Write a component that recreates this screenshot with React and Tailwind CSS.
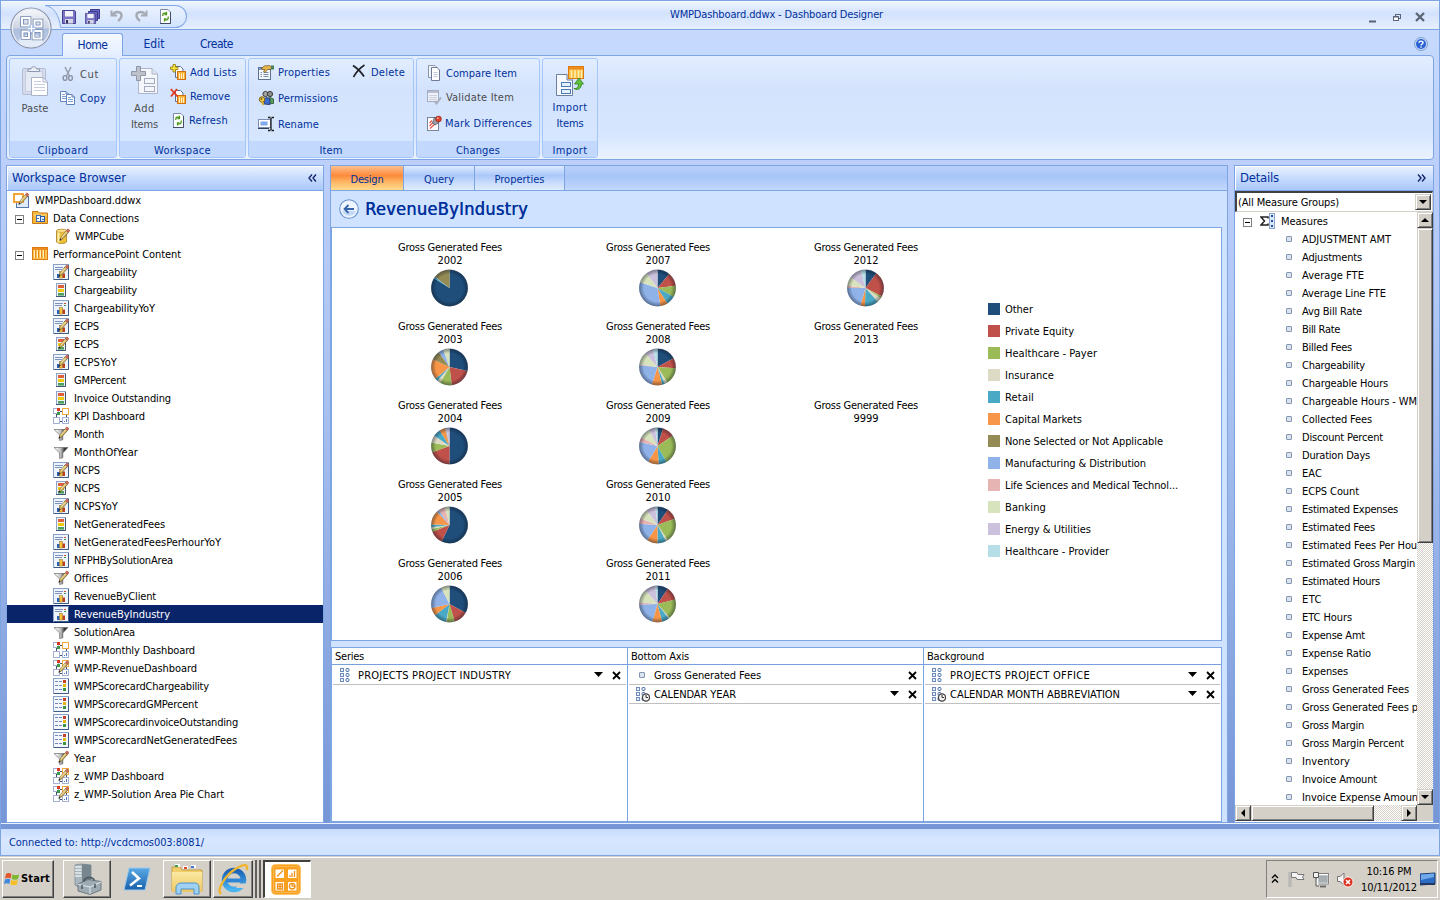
import React, { useLayoutEffect, useRef } from "react";

/* Text fitted to a fixed advance width by spreading the difference over its letters. */
function T({ w, children, flat, className = "" }) {
  const ref = useRef(null);
  useLayoutEffect(() => {
    const el = ref.current;
    if (!w || !el) return;
    el.style.letterSpacing = "0px";
    const natural = el.getBoundingClientRect().width;
    el.style.letterSpacing = `${(w - natural) / String(children).length}px`;
  }, [w, children]);
  return (
    <span className={`flex ${flat ? "" : "-mb-px pt-px"} ${className}`}>
      <span ref={ref} className="inline-block whitespace-pre">
        {children}
      </span>
    </span>
  );
}

const Svg = ({ s = 16, h, vb, children, className = "" }) => (
  <svg width={s} height={h || s} viewBox={vb || `0 0 ${s} ${h || s}`} className={`block shrink-0 ${className}`} fill="none">
    {children}
  </svg>
);

/* ---------- small drawings ---------- */

const Pencil = () => (
  <g>
    <path d="M6 12L7 9L12.300 2.800L14.400 4.600L8.800 10.800Z" fill="#d9b866" stroke="#6b5a34" strokeWidth=".7" />
    <path d="M7.500 9.400L12.600 3.600" stroke="#f8e9ae" strokeWidth="1" />
    <path d="M12.400 2.500L13.800 .8L16 2.600L14.500 4.500Z" fill="#cf6a5a" stroke="#9c4a40" strokeWidth=".5" />
    <path d="M5.300 12.800L6.300 10.800L7.600 12Z" fill="#222" />
  </g>
);

const ReportBase = () => (
  <g>
    <rect x=".5" y=".5" width="15" height="15" fill="#eef4fd" stroke="#8aa2c8" />
    <path d="M15.500 1V15.500H1" stroke="#3f5c86" />
    <path d="M2 3.500H10M2 5.500H9" stroke="#7d93bd" />
    <path d="M11 3.500H13" stroke="#cf4a33" />
    <path d="M11 5.500H13" stroke="#3f9a4c" />
    <rect x="4" y="10" width="2.600" height="4" fill="#2c5fb4" />
    <rect x="6.600" y="7.500" width="3" height="6.500" fill="#f3c33c" stroke="#8a6a1c" strokeWidth=".5" />
    <rect x="9.600" y="9.500" width="2.400" height="4.500" fill="#b8401e" />
  </g>
);

const KpiBase = () => (
  <g>
    <rect x="3.500" y="1.500" width="9" height="13" fill="#eef3fb" stroke="#8ea3c6" />
    <path d="M12.500 2V14.500H3" stroke="#3f5878" />
    <rect x="5" y="3" width="6" height="3" fill="#e0603c" />
    <rect x="5" y="7" width="6" height="3" fill="#efc90c" />
    <rect x="5" y="11" width="6" height="2.600" fill="#4fa05a" />
  </g>
);

const DashBase = () => (
  <g shapeRendering="crispEdges">
    <path d="M3 6V10M13 6V10M7 3H9M7 13H9" stroke="#44506a" />
    <rect x=".5" y=".5" width="5" height="5" fill="#fff" stroke="#a3b2d4" />
    <rect x="9.500" y=".5" width="6" height="6" fill="#fff" stroke="#f0a93c" />
    <rect x=".5" y="9.500" width="6" height="6" fill="#fff" stroke="#a3b2d4" />
    <rect x="9.500" y="9.500" width="6" height="6" fill="#fff" stroke="#a3b2d4" />
    <rect x="4" y="0" width="3" height="3" fill="#d93a20" />
    <rect x="4" y="4" width="3" height="3" fill="#3f9a4c" />
    <path d="M11.500 13V14M13.500 11V14" stroke="#4d75b8" />
  </g>
);

const FunnelBase = () => (
  <g>
    <path d="M1 3.500H15L9.800 9V13.800L6.600 14.500V9Z" fill="url(#fun)" />
    <path d="M1 3.500H15L9.800 9V13.800L6.600 14.500V9Z" stroke="#5c5c5c" strokeWidth=".6" />
  </g>
);

const ScoreBase = () => (
  <g>
    <rect x=".5" y=".5" width="15" height="15" fill="#f4f8fe" stroke="#8aa2c8" />
    <path d="M15.500 1V15.500H1" stroke="#3f5c86" />
    <path d="M2 3.500H5M6 3.500H9M2 7.500H5M6 7.500H9M2 11.500H5M6 11.500H9" stroke="#7487b4" />
    <rect x="10" y="2" width="3" height="3" fill="#c9402a" />
    <rect x="10" y="6" width="3" height="3" fill="#e3b60c" />
    <rect x="10" y="10" width="3" height="3" fill="#3a9440" />
  </g>
);

const Folder = () => (
  <g>
    <path d="M.5 13.500V1.500H6L7.500 3H15.500V13.500Z" fill="#f6b73a" stroke="#c8791a" />
    <path d="M1.500 5H14.500" stroke="#fde08c" />
  </g>
);

const Columns = () => (
  <g shapeRendering="crispEdges">
    <rect x=".5" y="1.500" width="15" height="12" fill="#fbc24c" stroke="#dd7a12" />
    <rect x="1" y="2" width="14" height="2" fill="#f08a1c" />
    <path d="M3.500 4V12M6.500 4V12M9.500 4V12M12.500 4V12" stroke="#e68a1c" />
    <path d="M2.500 4V12M5.500 4V12M8.500 4V12M11.500 4V12" stroke="#fff0bd" />
  </g>
);

const TreeIcon = ({ kind }) => {
  const k = kind.replace("+", "");
  return (
    <Svg>
      {k === "report" && <ReportBase />}
      {k === "kpi" && <KpiBase />}
      {k === "dash" && <DashBase />}
      {k === "filter" && <FunnelBase />}
      {k === "score" && <ScoreBase />}
      {k === "columns" && <Columns />}
      {k === "conn" && (
        <g>
          <Folder />
          <rect x="4.500" y="5.500" width="4" height="6" fill="#fff" stroke="#3f6eb8" />
          <rect x="8.500" y="6.500" width="4" height="5" fill="#dce9fb" stroke="#2c5aa6" />
          <path d="M5 8.500H7M10 9.500H12" stroke="#3f6eb8" />
        </g>
      )}
      {k === "cube" && (
        <g>
          <path d="M2.500 2.500C4 1 11 1 12.500 2.500V14C11 16 4 16 2.500 14Z" fill="#f0c33a" stroke="#a87a1a" strokeWidth=".8" />
          <path d="M4.500 4V14.500" stroke="#fdf0b0" strokeWidth="2" />
          <ellipse cx="7.500" cy="2.800" rx="5" ry="1.600" fill="#fbe08a" stroke="#b88a24" strokeWidth=".5" />
        </g>
      )}
      {k === "root" && (
        <g>
          <rect x="3.500" y="4.500" width="12" height="11" fill="#dfeafb" stroke="#5474a8" />
          <rect x="1" y="2" width="9" height="8" fill="#fff" stroke="#f29c22" strokeWidth="1.800" />
        </g>
      )}
      {kind.includes("+") && <Pencil />}
    </Svg>
  );
};

const Page = ({ x = 0, y = 0 }) => (
  <g transform={`translate(${x} ${y})`}>
    <path d="M.5 .5H6L8.500 3V10.500H.5Z" fill="#fff" stroke="#5f83bd" />
    <path d="M2 3.500H5M2 5.500H7M2 7.500H7" stroke="#7ea0d4" />
    <path d="M6 .5V3H8.500" stroke="#5f83bd" />
  </g>
);

const RefreshIcon = () => (
  <Svg>
    <path d="M3.500 1.500H11L13.500 4V15.500H3.500Z" fill="#fdfefe" stroke="#7c8ba6" />
    <path d="M13.500 4V15.500H3" stroke="#3f4d66" />
    <path d="M5.800 8V7C5.800 5 8 4.800 9.500 5.600M9.500 3.800V6.500H7.500" stroke="#4e9a1c" strokeWidth="1.300" />
    <path d="M11.200 8.500V10C11.200 12 9 12.300 7.500 11.500M7.500 13.500V10.800H9.500" stroke="#4e9a1c" strokeWidth="1.300" />
  </Svg>
);

const MiniList = () => (
  <g>
    <path d="M5.500 2.500H10.500L13 5V13.500H5.500Z" fill="#fff" stroke="#5c6f92" />
    <rect x="7.500" y="7.500" width="8" height="8" fill="#f9b23c" stroke="#d0700e" />
    <path d="M9.500 9.500V15M11.500 9.500V15M13.500 9.500V15" stroke="#fff0c4" />
  </g>
);

const AddListIcon = () => (
  <Svg>
    <MiniList />
    <path d="M3 .5H5.500V3H8V5.500H5.500V8H3V5.500H.5V3H3Z" fill="#f7df3c" stroke="#927a12" strokeWidth=".8" />
  </Svg>
);
const RemoveIcon = () => (
  <Svg>
    <MiniList />
    <path d="M.800 1L7.500 8.500M7 1L1 8.500" stroke="#e23a22" strokeWidth="1.800" />
  </Svg>
);
const CutIcon = () => (
  <Svg>
    <path d="M5 1L9.500 10M11 1L6.500 10" stroke="#9aa1ae" strokeWidth="1.600" />
    <ellipse cx="5" cy="12" rx="1.900" ry="2.400" stroke="#8b93a4" strokeWidth="1.400" />
    <ellipse cx="10.500" cy="12" rx="1.900" ry="2.400" stroke="#8b93a4" strokeWidth="1.400" />
  </Svg>
);
const CopyIcon = () => (
  <Svg>
    <Page x={0} y={1} />
    <Page x={6} y={4} />
  </Svg>
);
const PasteIcon = () => (
  <Svg s={28} h={32}>
    <rect x="1.500" y="3.500" width="23" height="26" rx="1.500" fill="#d5dbea" stroke="#b5bdd2" />
    <rect x="4.500" y="6.500" width="17" height="20" fill="#e6eaf5" stroke="#c6cde0" />
    <path d="M7 6.500V4H10C10 1 15.500 1 15.500 4H18.500V6.500Z" fill="#eceff6" stroke="#8d97ae" />
    <path d="M10.500 12.500H22L26.500 17V30.500H10.500Z" fill="#fff" stroke="#aab2c8" />
    <path d="M22 12.500V17H26.500" stroke="#aab2c8" />
    <path d="M13 16.500H20M13 19.500H24M13 22.500H24M13 25.500H24" stroke="#c6cddd" />
  </Svg>
);
const AddItemsIcon = () => (
  <Svg s={28} h={32}>
    <path d="M7.500 4.500H21L26.500 10V29.500H7.500Z" fill="#f4f6fb" stroke="#aeb6c9" />
    <path d="M21 4.500V10H26.500" fill="#dde2ee" stroke="#aeb6c9" />
    <rect x="13.500" y="14.500" width="10" height="5" stroke="#a3abc0" />
    <rect x="13.500" y="22.500" width="10" height="5" stroke="#a3abc0" />
    <path d="M5.500 2.500H9.500V7.500H14.500V11.500H9.500V16.500H5.500V11.500H.5V7.500H5.500Z" fill="#bdc1ca" stroke="#8f96a6" />
  </Svg>
);
const ImportIcon = () => (
  <Svg s={32}>
    <path d="M2.500 9.500H13L18.500 15V30.500H2.500Z" fill="#f6f9fe" stroke="#6d7f9c" />
    <path d="M13 9.500V15H18.500" fill="#dde6f4" stroke="#6d7f9c" />
    <rect x="7.500" y="17.500" width="9" height="4" fill="#e3f0fd" stroke="#4a79b8" />
    <rect x="7.500" y="24.500" width="9" height="4" fill="#e3f0fd" stroke="#4a79b8" />
    <rect x="14.500" y="1.500" width="15" height="12" fill="#fcbf44" stroke="#dc7a10" />
    <rect x="15" y="2" width="14" height="2.500" fill="#ef8c1c" />
    <path d="M17.500 5V13M21 5V13M24.500 5V13M27.500 5V13" stroke="#fff0b4" strokeWidth="1.500" />
    <path d="M20 23.500C23 24 24.500 22 24.500 19H20.500L25 13L29.500 19H27.500C27.500 23 24.500 26 20 23.500Z" fill="#5fc23e" stroke="#2d7d1c" strokeWidth=".8" />
  </Svg>
);
const PropsIcon = () => (
  <Svg>
    <rect x=".5" y="3.500" width="12" height="12" fill="#f4f8fd" stroke="#5f7293" />
    <rect x="1" y="4" width="11" height="2" fill="#7c9ccc" />
    <path d="M2.500 8.500H4M5.500 8.500H10.500M2.500 10.500H4M5.500 10.500H10.500M2.500 12.500H4M5.500 12.500H10.500" stroke="#7d8fae" />
    <path d="M3 5L6 2L11 1.500L13.500 2.500V5L9.500 5.500L7 8.500L5.500 7.500L7 5.500Z" fill="#e9b94e" stroke="#74521c" strokeWidth=".7" />
    <rect x="13" y="1.500" width="3" height="4" fill="#4a7f5e" />
  </Svg>
);
const PermIcon = () => (
  <Svg>
    <circle cx="7.500" cy="4" r="2.600" fill="#a3a3a0" stroke="#3d3d3b" />
    <circle cx="12" cy="4" r="2.600" fill="#8c8c8a" stroke="#3d3d3b" />
    <path d="M8.500 14V9L12 7.500L15.500 9V13.500Z" fill="#56a05a" stroke="#2b4b2e" strokeWidth=".8" />
    <path d="M6 14V8.500L9 7.500L12 9V14.500Z" fill="#3c6cd0" stroke="#1e2f66" strokeWidth=".8" />
    <circle cx="4" cy="9.500" r="2.700" fill="#f3d04c" stroke="#7a5d12" />
    <path d="M4 11.500L5.500 15" stroke="#d8a828" strokeWidth="2" />
    <circle cx="3.400" cy="9" r=".9" fill="#6b5212" />
  </Svg>
);
const RenameIcon = () => (
  <Svg>
    <rect x=".5" y="3.500" width="12" height="8" fill="#fff" stroke="#7a8eb2" />
    <rect x="2.500" y="5.500" width="7" height="4" fill="#7fa9ee" />
    <path d="M0 12.500H11" stroke="#33415e" />
    <path d="M10 1.500H12.500M13.500 1.500H16M10 14.500H12.500M13.500 14.500H16M13 2V14" stroke="#1c1c1c" strokeWidth="1.300" />
  </Svg>
);
const DeleteIcon = () => (
  <Svg>
    <path d="M2 1.500C6 4 10 8 13 12.500" stroke="#22242a" strokeWidth="1.900" />
    <path d="M13.500 1C9 4 5 8.500 2.500 13" stroke="#22242a" strokeWidth="1.600" />
  </Svg>
);
const CompareIcon = () => (
  <Svg>
    <path d="M2.500 .5H9L11.500 3V12.500H2.500Z" fill="#eff3fa" stroke="#8d97aa" />
    <path d="M5.500 2.500H11L13.500 5V15.500H5.500Z" fill="#fff" stroke="#6d7a92" />
    <path d="M7.500 7.500H11.500M7.500 9.500H11.500M7.500 11.500H11.500" stroke="#bcc5d6" />
  </Svg>
);
const ValidateIcon = () => (
  <Svg>
    <rect x="1.500" y="1.500" width="11" height="11" fill="#f0f2f8" stroke="#a3acc2" />
    <path d="M2 3H12" stroke="#b6bed0" strokeWidth="2" />
    <path d="M3.500 6.500H11M3.500 8.500H11M3.500 10.500H11" stroke="#a4aec6" strokeDasharray="1 1" />
    <path d="M8.500 12L10.500 14.500L15 8.500" stroke="#a8aec0" strokeWidth="2" />
  </Svg>
);
const MarkIcon = () => (
  <Svg>
    <rect x="1.500" y="2.500" width="11" height="13" fill="#fdfdff" stroke="#7a8398" />
    <path d="M3.500 11L7 7.500M4 13.500L10 8M3.500 8L6 5.500" stroke="#e2564a" strokeWidth="1.200" />
    <path d="M6.500 8L8.500 2L13 7.500L9 10Z" fill="#9a9ea8" stroke="#4d5058" strokeWidth=".7" />
    <circle cx="12.500" cy="4" r="2.900" fill="#e2412c" stroke="#7e1f14" strokeWidth=".6" />
    <circle cx="11.700" cy="3.200" r=".9" fill="#fbb4a8" />
  </Svg>
);

const Floppy = ({ x = 0, y = 0, s = 14 }) => (
  <g transform={`translate(${x} ${y}) scale(${s / 14})`}>
    <path d="M.5 .5H12.500L13.500 1.500V13.500H.5Z" fill="#7c74c4" stroke="#454092" />
    <rect x="3" y="1" width="8" height="5.500" fill="#f1f2fa" />
    <rect x="3" y="9" width="8" height="4.500" fill="#d5d8e4" />
    <rect x="4" y="10" width="2" height="3.500" fill="#35315e" />
  </g>
);
const BackFloppy = ({ x, y }) => (
  <path transform={`translate(${x} ${y})`} d="M.5 .5H9.500V9.500H.5Z" fill="#6a68c4" stroke="#3c3a8c" />
);
const UndoIcon = ({ flip }) => (
  <Svg className={flip ? "-scale-x-100" : ""}>
    <path d="M2.500 2.500V7.500H8" stroke="#a6aab4" strokeWidth="2" />
    <path d="M3.500 7C6.500 2.500 13 3.500 12.500 8C12.200 10.500 10.500 12 9 13" stroke="#a6aab4" strokeWidth="2.400" />
  </Svg>
);

/* ---------- chart ---------- */

const SERIES = [
  ["Other", "#1f4e7b", 28, "bg-[#1f4e7b]"],
  ["Private Equity", "#c0504a", 69, "bg-[#c0504a]"],
  ["Healthcare - Payer", "#9bbb59", 92, "bg-[#9bbb59]"],
  ["Insurance", "#ddd9c3", 49, "bg-[#dddbc6]"],
  ["Retail", "#4aa9c5", 29, "bg-[#4aa9c5]"],
  ["Capital Markets", "#f79648", 77, "bg-[#f79648]"],
  ["None Selected or Not Applicable", "#948a54", 158, "bg-[#948a54]"],
  ["Manufacturing & Distribution", "#8fb2e8", 141, "bg-[#8fb2e8]"],
  ["Life Sciences and Medical Technol...", "#e6b4b3", 173, "bg-[#e6b4b3]"],
  ["Banking", "#d7e3bc", 41, "bg-[#d7e3bc]"],
  ["Energy & Utilities", "#ccc1dc", 86, "bg-[#ccc1dc]"],
  ["Healthcare - Provider", "#b6dee6", 104, "bg-[#b6dee6]"],
];

const YEARS = [
  [
    ["2002", [84, 0, 0, 0, 1.5, 0, 14.5, 0, 0, 0, 0, 0]],
    ["2003", [28.5, 19.5, 10.5, 3, 2.5, 18, 8, 4.5, 0, 5.5, 0, 0]],
    ["2004", [50, 19.5, 8.5, 6.5, 6.5, 5, 0.5, 0.5, 0, 0, 3, 0]],
    ["2005", [57, 12, 2.5, 1.5, 2.5, 12.5, 0, 2, 6, 4, 0, 0]],
    ["2006", [33, 12.5, 7, 0.5, 11.5, 7, 0, 21, 0, 7.5, 0, 0]],
  ],
  [
    ["2007", [11, 12, 10, 0, 8, 6.5, 0, 32.5, 0, 10, 10, 0]],
    ["2008", [17, 9, 15, 2.5, 2.5, 9, 0, 21.5, 1, 11, 7.5, 4]],
    ["2009", [5, 10.5, 26.5, 0, 7, 9.5, 0, 20, 4.5, 9.5, 5.5, 2]],
    ["2010", [9.5, 10, 21, 2, 7.5, 9.5, 0, 16.5, 5, 9, 8, 2]],
    ["2011", [9.5, 11.5, 17.5, 1, 6.5, 8.5, 0, 20, 2, 12, 9.5, 2]],
  ],
  [
    ["2012", [10, 22.5, 2, 4, 12, 4, 0, 20.5, 2, 8, 11, 4]],
    ["2013", null],
    ["9999", null],
  ],
];

function Pie({ data }) {
  const total = data.reduce((a, b) => a + b, 0);
  let acc = 0;
  const p = (f) => [18.5 + 18.3 * Math.sin(f * 2 * Math.PI), 19 - 18.3 * Math.cos(f * 2 * Math.PI)];
  return (
    <Svg s={38}>
      {data.map((v, i) => {
        if (!v) return null;
        const a = acc / total;
        acc += v;
        const b = acc / total;
        const [x1, y1] = p(a);
        const [x2, y2] = p(b);
        return <path key={i} d={`M18.5 19L${x1} ${y1}A18.3 18.3 0 ${b - a > 0.5 ? 1 : 0} 1 ${x2} ${y2}Z`} fill={SERIES[i][1]} />;
      })}
      <circle cx="18.5" cy="19" r="18.5" fill="url(#bevel)" />
    </Svg>
  );
}

/* ---------- data ---------- */

const TREE = [
  ["report+", "Chargeability", 63],
  ["kpi", "Chargeability", 63],
  ["report", "ChargeabilityYoY", 81],
  ["report+", "ECPS", 25],
  ["kpi+", "ECPS", 25],
  ["report+", "ECPSYoY", 43],
  ["kpi", "GMPercent", 52],
  ["kpi", "Invoice Outstanding", 97],
  ["dash", "KPI Dashboard", 71],
  ["filter+", "Month", 30],
  ["filter", "MonthOfYear", 64],
  ["report+", "NCPS", 26],
  ["kpi+", "NCPS", 26],
  ["report+", "NCPSYoY", 44],
  ["kpi", "NetGeneratedFees", 91],
  ["report", "NetGeneratedFeesPerhourYoY", 147],
  ["report", "NFPHBySolutionArea", 99],
  ["filter+", "Offices", 34],
  ["report", "RevenueByClient", 82],
  ["report", "RevenueByIndustry", 96],
  ["filter", "SolutionArea", 61],
  ["dash", "WMP-Monthly Dashboard", 121],
  ["dash+", "WMP-RevenueDashboard", 123],
  ["score", "WMPScorecardChargeability", 135],
  ["score", "WMPScorecardGMPercent", 124],
  ["score", "WMPScorecardinvoiceOutstanding", 164],
  ["score", "WMPScorecardNetGeneratedFees", 163],
  ["filter+", "Year", 22],
  ["dash+", "z_WMP Dashboard", 90],
  ["dash+", "z_WMP-Solution Area Pie Chart", 150],
];

const MEASURES = [
  ["ADJUSTMENT AMT", 89],
  ["Adjustments", 60],
  ["Average FTE", 62],
  ["Average Line FTE", 84],
  ["Avg Bill Rate", 60],
  ["Bill Rate", 38],
  ["Billed Fees", 50],
  ["Chargeability", 63],
  ["Chargeable Hours", 86],
  ["Chargeable Hours - WM", 115],
  ["Collected Fees", 70],
  ["Discount Percent", 81],
  ["Duration Days", 68],
  ["EAC", 20],
  ["ECPS Count", 57],
  ["Estimated Expenses", 96],
  ["Estimated Fees", 73],
  ["Estimated Fees Per Hou", 115],
  ["Estimated Gross Margin", 113],
  ["Estimated Hours", 78],
  ["ETC", 20],
  ["ETC Hours", 50],
  ["Expense Amt", 63],
  ["Expense Ratio", 69],
  ["Expenses", 46],
  ["Gross Generated Fees", 107],
  ["Gross Generated Fees p", 116],
  ["Gross Margin", 62],
  ["Gross Margin Percent", 102],
  ["Inventory", 48],
  ["Invoice Amount", 75],
  ["Invoice Expense Amoun", 116],
];

/* ---------- building blocks ---------- */

const Toggle = () => (
  <span className="mt-[2px] flex h-[9px] w-[9px] shrink-0 items-center justify-center border border-[#808080] bg-white">
    <span className="h-px w-[5px] bg-black" />
  </span>
);

const Group = ({ label, lw, className, children }) => (
  <div className={`flex h-[100px] flex-col overflow-hidden rounded-[3px] border border-[#a5c6fb] bg-[linear-gradient(#e2edff,#d3e3fd_30%,#d6e6fe_80%)] ${className}`}>
    <div className="flex h-[82px]">{children}</div>
    <div className="flex h-4 items-center justify-center bg-[#c2d8fc] pt-[2px] text-[#00309c]">
      <T w={lw}>{label}</T>
    </div>
  </div>
);

const Cmd = ({ icon, label, w, off, className = "h-6", gap = "gap-1" }) => (
  <div className={`flex items-center ${gap} ${className} ${off ? "text-[#4d4d4d]" : "text-[#00309c]"}`}>
    {icon}
    <T w={w}>{label}</T>
  </div>
);

const MeasureDot = () => (
  <span className="h-[6px] w-[6px] shrink-0 rounded-[1px] border border-[#8397b5] bg-[#dbe3ee]" />
);

const DimIcon = ({ clock }) => (
  <Svg>
    {[1.5, 6.5, 11.5].map((y) => (
      <g key={y}>
        <rect x="2.500" y={y} width="3" height="3" fill="#e8f0fb" stroke="#6f8cbc" />
        <rect x="8" y={y} width="3" height="3" rx="1" fill="#e8f0fb" stroke="#4f72ae" />
      </g>
    ))}
    {clock && (
      <g>
        <circle cx="12" cy="11.500" r="3.600" fill="#f2f2f2" stroke="#444" strokeWidth="1.300" />
        <path d="M12 9V11.500H14" stroke="#333" />
      </g>
    )}
  </Svg>
);

const DropRow = ({ icon, label, w, arrow }) => (
  <div className="mx-px flex h-[19px] items-center border-b border-[#c0c0c0]">
    <div className="flex w-[25px] justify-center">{icon}</div>
    <T w={w}>{label}</T>
    <div className="flex-1" />
    {arrow && (
      <Svg s={9} h={5} className="-mt-[2px]">
        <path d="M0 0H9L4.500 5Z" fill="#000" />
      </Svg>
    )}
    <Svg s={9} h={9} className="mr-[5px] ml-[9px]">
      <path d="M1 1L8 8M8 1L1 8" stroke="#000" strokeWidth="1.800" />
    </Svg>
  </div>
);

const DropZone = ({ title, w, className, children }) => (
  <div className={`flex flex-col ${className}`}>
    <div className="mb-px flex h-[17px] items-center border-b border-[#7a9fde] pl-[3px]">
      <T w={w}>{title}</T>
    </div>
    {children}
  </div>
);

const raised = "border border-t-[#d4d0c8] border-l-[#d4d0c8] border-r-[#404040] border-b-[#404040] bg-[#d4d0c8] shadow-[inset_1px_1px_0_#fff,inset_-1px_-1px_0_#808080]";
const taskBtn = "flex h-[38px] items-center justify-center border border-t-white border-l-white border-r-[#404040] border-b-[#404040] bg-[#d4d0c8] shadow-[inset_-1px_-1px_0_#808080]";
const checker = "bg-[repeating-conic-gradient(#fff_0_25%,#d4d0c8_0_50%)] bg-[length:2px_2px]";

const ScrollBtn = ({ d, className = "" }) => (
  <div className={`flex h-4 w-4 shrink-0 items-center justify-center ${raised} ${className}`}>
    <Svg s={8}>
      <path d={d} fill="#000" />
    </Svg>
  </div>
);

/* ---------- page ---------- */

function TitleBar() {
  return (
    <div className="relative flex h-[30px] shrink-0 items-center border-y border-[#7da4e3] bg-[linear-gradient(#f2f7ff,#dbe8ff_30%,#d3e2fd_45%,#e6effe)]">
      <div className="flex h-full w-[186px] items-center">
        <Svg s={16} h={23} className="mt-[2px] ml-[44px]">
          <path d="M0 .5H16V22.500H15.500C14.500 11 9 1.500 0 .5Z" fill="#e0ebff" />
          <path d="M16 22.500H15.500C14.500 11 9 1.500 0 .5H16" stroke="#82a8e6" />
        </Svg>
        <div className="mt-[2px] flex h-[23px] w-[126px] items-center gap-2 rounded-r-[12px] border border-l-0 border-[#82a8e6] bg-[linear-gradient(#eaf2ff,#d3e3fd)]">
          <Svg><Floppy x={1} y={2} s={14} /></Svg>
          <Svg><BackFloppy x={5} y={1} /><BackFloppy x={3} y={3} /><Floppy x={0} y={5} s={11} /></Svg>
          <UndoIcon />
          <UndoIcon flip />
          <RefreshIcon />
        </div>
      </div>
      <div className="-mt-[2px] flex flex-1 justify-center text-[#00309c]">
        <T w={213}>WMPDashboard.ddwx - Dashboard Designer</T>
      </div>
      <div className="flex w-[73px] items-center pt-[4px] pl-[2px]">
        <Svg s={9} h={11}><path d="M1 9.500H8" stroke="#5a6474" strokeWidth="2" /></Svg>
        <Svg s={9} h={9} className="ml-[16px]">
          <rect x="2.500" y="1.500" width="5" height="4" stroke="#5a6474" />
          <rect x=".5" y="3.500" width="5" height="4" fill="#fff" stroke="#5a6474" />
          <path d="M0 4H6" stroke="#5a6474" />
        </Svg>
        <Svg s={10} className="ml-[13px]"><path d="M1 1L9 9M9 1L1 9" stroke="#5a6474" strokeWidth="2.300" /></Svg>
      </div>
      <Svg s={44} className="absolute top-[5px] left-[8px]">
        <circle cx="22" cy="22" r="20" fill="url(#orb)" stroke="#8b93a8" strokeWidth="1.200" />
        <circle cx="22" cy="22" r="18.700" stroke="#e9edf6" strokeWidth="1.200" />
        <path d="M4 22.500H40A18 18 0 0 1 4 22.500Z" fill="#8fa9d6" opacity=".5" />
        <ellipse cx="22" cy="34.500" rx="12" ry="6" fill="#f6faff" opacity=".7" />
        <g stroke="#7086b0" strokeWidth="3.600">
          <path d="M13 12H20.500V19.500H13ZM25.500 14.500H32.500V20.500H25.500ZM13.500 25.500H20V32H13.500ZM24.500 25H32.500V32.500H24.500Z" />
        </g>
        <g stroke="#fff" strokeWidth="2">
          <path d="M13 12H20.500V19.500H13ZM25.500 14.500H32.500V20.500H25.500ZM13.500 25.500H20V32H13.500ZM24.500 25H32.500V32.500H24.500Z" />
        </g>
        <circle cx="22.500" cy="22.500" r="4" fill="#b3c8ee" opacity=".8" />
        <path d="M22.500 19V26M19 22.500H26" stroke="#fff" strokeWidth="1" />
      </Svg>
    </div>
  );
}

function Ribbon() {
  return (
    <div className="shrink-0 px-[5px]">
      <div className="flex h-[25px] items-end pl-[56px] text-[12px] text-[#00309c]">
        <div className="z-10 -mb-px flex h-[23px] w-[61px] items-center justify-center rounded-t-[3px] border border-b-0 border-[#7da4e3] bg-[linear-gradient(#f4f8ff,#e4eeff)]">
          <T w={30} flat>Home</T>
        </div>
        <div className="flex h-[22px] w-[62px] items-center justify-center"><T w={21} flat>Edit</T></div>
        <div className="flex h-[22px] w-[63px] items-center justify-center"><T w={33} flat>Create</T></div>
        <div className="flex-1" />
        <Svg s={14} className="mr-[6px] mb-[4px]">
          <circle cx="7" cy="7" r="6.500" fill="#c5daf8" stroke="#7f9fd0" />
          <circle cx="7" cy="7" r="5" fill="#2a62d4" />
          <path d="M5 5.800C5 3.500 9 3.500 9 5.800C9 7 7 7 7 8.500M7 9.500V10.700" stroke="#fff" strokeWidth="1.400" />
        </Svg>
      </div>
      <div className="flex h-[105px] gap-[2px] rounded-[4px] border border-[#7da4e3] bg-[linear-gradient(#e2edff,#d3e3fd_35%,#d6e6fe_75%,#eaf2ff)] px-[2px] py-[2px]">
        <Group label="Clipboard" lw={51} className="w-[108px]">
          <div className="flex w-[50px] flex-col items-center pt-1.5 text-[#4d4d4d]">
            <PasteIcon />
            <T w={27} className="mt-[3px]">Paste</T>
          </div>
          <div className="flex flex-col pt-[3px]">
            <Cmd icon={<CutIcon />} label="Cut" w={19} off />
            <Cmd icon={<CopyIcon />} label="Copy" w={26} />
          </div>
        </Group>
        <Group label="Workspace" lw={57} className="w-[127px]">
          <div className="flex w-[49px] flex-col items-center pt-[5px] text-[#4d4d4d]">
            <AddItemsIcon />
            <T w={21} className="mt-[4px]">Add</T>
            <T w={27}>Items</T>
          </div>
          <div className="flex flex-col pt-px pl-px">
            <Cmd icon={<AddListIcon />} label="Add Lists" w={47} />
            <Cmd icon={<RemoveIcon />} label="Remove" w={40} />
            <Cmd icon={<RefreshIcon />} label="Refresh" w={39} gap="gap-[3px]" />
          </div>
        </Group>
        <Group label="Item" lw={23} className="w-[166px]">
          <div className="flex w-[92px] flex-col pl-[9px]">
            <Cmd icon={<PropsIcon />} label="Properties" w={52} className="h-[26px]" />
            <Cmd icon={<PermIcon />} label="Permissions" w={60} className="h-[26px]" />
            <Cmd icon={<RenameIcon />} label="Rename" w={41} className="h-[26px]" />
          </div>
          <div className="pl-[10px]">
            <Cmd icon={<DeleteIcon />} label="Delete" w={34} className="h-[26px]" />
          </div>
        </Group>
        <Group label="Changes" lw={44} className="w-[124px]">
          <div className="flex flex-col pt-[2px] pl-[9px]">
            <Cmd icon={<CompareIcon />} label="Compare Item" w={71} />
            <Cmd icon={<ValidateIcon />} label="Validate Item" w={68} off />
            <Cmd icon={<MarkIcon />} label="Mark Differences" w={87} className="h-7" gap="gap-[3px]" />
          </div>
        </Group>
        <Group label="Import" lw={35} className="w-[56px]">
          <div className="flex w-full flex-col items-center pt-[6px] text-[#00309c]">
            <ImportIcon />
            <T w={35} className="mt-[2px]">Import</T>
            <T w={27}>Items</T>
          </div>
        </Group>
      </div>
    </div>
  );
}

const PanelHead = ({ title, w, right }) => (
  <div className="flex h-[25px] shrink-0 items-center justify-between border-b border-[#7da4e3] bg-[linear-gradient(#eaf2ff,#cbddfd_45%,#aac8fa)] pr-[6px] pl-[5px] text-[13px] text-[#00309c] shadow-[inset_1px_1px_0_#fff]">
    <T w={w} flat>{title}</T>
    <Svg s={9} h={8} className={right ? "mr-px -scale-x-100" : ""}>
      <path d="M4 .5L1 4L4 7.500M8 .5L5 4L8 7.500" stroke="#14286e" strokeWidth="1.400" />
    </Svg>
  </div>
);

function Workspace() {
  return (
    <div className="flex w-[318px] flex-col border border-[#7da4e3] bg-white">
      <PanelHead title="Workspace Browser" w={114} />
      <div className="flex h-[18px] items-center pl-[6px]">
        <TreeIcon kind="root+" />
        <T w={106} className="ml-[6px]">WMPDashboard.ddwx</T>
      </div>
      <div className="flex h-[18px] items-center pl-2">
        <Toggle />
        <span className="ml-[8px]"><TreeIcon kind="conn" /></span>
        <T w={86} className="ml-[5px]">Data Connections</T>
      </div>
      <div className="flex h-[18px] items-center pl-[47px]">
        <TreeIcon kind="cube+" />
        <T w={49} className="ml-[5px]">WMPCube</T>
      </div>
      <div className="flex h-[18px] items-center pl-2">
        <Toggle />
        <span className="ml-[8px]"><TreeIcon kind="columns" /></span>
        <T w={128} className="ml-[5px]">PerformancePoint Content</T>
      </div>
      {TREE.map(([k, t, w], i) => (
        <div key={i} className={`flex h-[18px] items-center pl-[46px] ${i === 19 ? "bg-[#0a246a] text-white" : ""}`}>
          <TreeIcon kind={k} />
          <T w={w} className="ml-[5px]">{t}</T>
        </div>
      ))}
    </div>
  );
}

function Designer() {
  return (
    <div className="flex w-[898px] flex-col border border-[#7da4e3] bg-[#cfe2ff]">
      <div className="flex h-[25px] shrink-0 border-b border-[#7da4e3] bg-[linear-gradient(#b9d0fb,#a8c5f8_45%,#c3d8fd)] text-[#00309c]">
        <div className="flex w-[73px] items-center justify-center border-r border-[#7da4e3] bg-[linear-gradient(#fdc08d,#fd8a3c_40%,#fdb462_65%,#fedc8c)] pt-px"><T w={33}>Design</T></div>
        <div className="flex w-[71px] items-center justify-center border-r border-[#7da4e3] bg-[linear-gradient(#dfeaff,#a9c7f9_40%,#c5dafc_65%,#dfecff)] pt-px"><T w={30}>Query</T></div>
        <div className="flex w-[90px] items-center justify-center border-r border-[#7da4e3] bg-[linear-gradient(#dfeaff,#a9c7f9_40%,#c5dafc_65%,#dfecff)] pt-px"><T w={50}>Properties</T></div>
      </div>
      <div className="flex h-[36px] shrink-0 items-center pl-[8px]">
        <Svg s={20}>
          <circle cx="10" cy="10" r="9.300" fill="#eef5ff" stroke="#6a93cf" strokeWidth="1.100" />
          <path d="M3 12A7.500 7.500 0 0 0 17 12Z" fill="#c3d9f8" />
          <path d="M15 10H6M9.500 6L5.500 10L9.500 14" stroke="#3464ac" strokeWidth="1.800" />
        </Svg>
        <div className="ml-[6px] text-[18px] leading-[22px] text-[#00309c] [text-shadow:0.4px_0_0_#00309c]">
          <T w={163} flat>RevenueByIndustry</T>
        </div>
      </div>
      <div className="flex h-[414px] w-[891px] shrink-0 border border-[#7da4e3] bg-white">
        <div className="grid h-[407px] w-[638px] shrink-0 grid-cols-3 pt-[12px] pl-[14px]">
          {YEARS.map((col, c) => (
            <div key={c} className="flex flex-col">
              {col.map(([y, d]) => (
                <div key={y} className="flex h-[79px] shrink-0 flex-col items-center leading-[13px]">
                  <T w={104}>Gross Generated Fees</T>
                  <T w={25}>{y}</T>
                  <div className="mt-[3px] h-[38px]">{d && <Pie data={d} />}</div>
                </div>
              ))}
            </div>
          ))}
        </div>
        <div className="flex flex-col pt-[70px] pl-[18px]">
          {SERIES.map(([n, , w, bg]) => (
            <div key={n} className="flex h-[22px] items-center">
              <span className={`h-3 w-3 ${bg}`} />
              <T w={w} className="ml-[5px]">{n}</T>
            </div>
          ))}
        </div>
      </div>
      <div className="mt-[6px] flex w-[891px] flex-1 border border-[#7da4e3] bg-white">
        <DropZone title="Series" w={29} className="w-[296px] border-r border-[#7da4e3]">
          <DropRow icon={<DimIcon />} label="PROJECTS PROJECT INDUSTRY" w={153} arrow />
        </DropZone>
        <DropZone title="Bottom Axis" w={58} className="w-[296px] border-r border-[#7da4e3]">
          <DropRow icon={<MeasureDot />} label="Gross Generated Fees" w={107} />
          <DropRow icon={<DimIcon clock />} label="CALENDAR YEAR" w={82} arrow />
        </DropZone>
        <DropZone title="Background" w={57} className="flex-1">
          <DropRow icon={<DimIcon />} label="PROJECTS PROJECT OFFICE" w={140} arrow />
          <DropRow icon={<DimIcon clock />} label="CALENDAR MONTH ABBREVIATION" w={170} arrow />
        </DropZone>
      </div>
    </div>
  );
}

function Details() {
  return (
    <div className="flex w-[200px] flex-col border border-[#7da4e3] bg-white">
      <PanelHead title="Details" w={39} right />
      <div className="flex h-[21px] shrink-0 items-center justify-between border border-t-2 border-l-2 border-[#d4d0c8] border-t-[#404040] border-l-[#404040] bg-white pr-px pl-px">
        <T w={101}>{"(All Measure Groups)"}</T>
        <ScrollBtn d="M0 2H8L4 6Z" />
      </div>
      <div className="flex h-[593px] shrink-0">
        <div className="w-[182px] overflow-hidden">
          <div className="flex h-[18px] items-center pl-2">
            <Toggle />
            <Svg className="ml-[8px]">
              <path d="M8 5.500V4H1L4.500 8L1 12H8V10.500" stroke="#222" strokeWidth="1.500" />
              <rect x="9.500" y=".5" width="5" height="15" fill="#dce7f8" stroke="#8aa5d0" />
              <path d="M11 3H13M11 8H13M11 13H13" stroke="#2c50a4" strokeWidth="2" />
            </Svg>
            <T w={47} className="ml-[5px]">Measures</T>
          </div>
          {MEASURES.map(([t, w], i) => (
            <div key={i} className="flex h-[18px] items-center pl-[51px]">
              <MeasureDot />
              <T w={w} className="ml-[10px]">{t}</T>
            </div>
          ))}
        </div>
        <div className={`flex w-4 flex-col ${checker}`}>
          <ScrollBtn d="M0 6H8L4 2Z" />
          <div className={`h-[315px] ${raised}`} />
          <div className="flex-1" />
          <ScrollBtn d="M0 2H8L4 6Z" />
        </div>
      </div>
      <div className="flex h-4 bg-[#d4d0c8]">
        <div className={`flex h-4 w-[182px] ${checker}`}>
          <ScrollBtn d="M6 0V8L2 4Z" />
          <div className={`w-[123px] ${raised}`} />
          <div className="flex-1" />
          <ScrollBtn d="M2 0V8L6 4Z" />
        </div>
      </div>
    </div>
  );
}

function Taskbar() {
  return (
    <div className="flex h-[44px] border-t border-[#d4d0c8] bg-[#d4d0c8] pt-[3px] shadow-[inset_0_1px_0_#fff]">
      <div className={`ml-[2px] w-[52px] gap-px ${taskBtn}`}>
        <Svg s={16} className="-ml-[2px]">
          <path d="M2 3C4 1.500 6 2 7.500 3L6.500 7.500C5 6.500 3 6.500 1 7.500Z" fill="#e2562a" />
          <path d="M8.500 3.500C10.500 4.500 12.500 4.500 15 3.500L14 8C12 9 9.500 8.800 7.500 7.800Z" fill="#7cb82c" />
          <path d="M1 8.500C3 7.500 5 7.500 6.300 8.500L5.300 13C4 12 2 12 0 13Z" fill="#3f86dc" />
          <path d="M7.300 9C9 10 11.500 10 13.800 9L12.800 13.500C10.500 14.500 8 14.300 6.300 13.300Z" fill="#f8bf24" />
        </Svg>
        <T w={29} flat className="font-bold">Start</T>
      </div>
      <div className={`ml-[9px] w-[48px] ${taskBtn}`}>
        <Svg s={32}>
          <path d="M4 2L10 1L20 2V23L10 25L4 22Z" fill="#a9b6bd" stroke="#7c8a94" strokeWidth=".8" />
          <path d="M11 1L20 2V23L11 25Z" fill="#77858e" />
          <path d="M4 4H10.500M4 7H10.500M4 10H10.500M4 13H10.500" stroke="#e7eef1" strokeWidth="1.300" />
          <path d="M7 21L17 16.500L30 18.500V27L19 31.500L7 28Z" fill="#9eabb3" stroke="#5e6b74" strokeWidth=".8" />
          <path d="M7 21.500L19 24L30 19M19 24V31" stroke="#e3eaed" />
          <path d="M13 18.500C13 13.500 22 13 23.500 17.500" stroke="#49555d" strokeWidth="1.500" />
          <path d="M11 22V26M24 21V25" stroke="#4c5860" strokeWidth="1.500" />
        </Svg>
      </div>
      <div className="flex h-[38px] w-[51px] items-center justify-center">
        <Svg s={30}>
          <path d="M7 4H28L23 26H2Z" fill="url(#ps)" stroke="#9cc9ec" />
          <path d="M10 8L17 14.500L8 21.500" stroke="#fff" strokeWidth="2.500" />
          <path d="M15 22H20" stroke="#fff" strokeWidth="2" />
        </Svg>
      </div>
      <div className={`ml-px w-[48px] ${taskBtn}`}>
        <Svg s={34}>
          <path d="M2 29V5H10L12 8H32V29Z" fill="#f0ce6c" stroke="#c9a040" />
          <path d="M5 3.500H10M13 5.500H18M21 4.500H26" stroke="#fff" strokeWidth="3" />
          <path d="M5 4H8" stroke="#3d9e4e" strokeWidth="2" />
          <path d="M14 6H17" stroke="#d8482c" strokeWidth="2" />
          <path d="M21 5H24" stroke="#3f78cc" strokeWidth="2" />
          <path d="M2 10H32V30H2Z" fill="url(#fold)" />
          <path d="M6 32V26C6 22 9 21 12 21H24C28 21 29 23 29 26V32H24V27H11V32Z" fill="#9fd2f2" stroke="#4a93cc" />
        </Svg>
      </div>
      <div className={`ml-[2px] w-[40px] ${taskBtn}`}>
        <Svg s={32}>
          <circle cx="17" cy="17" r="9.500" stroke="url(#ie)" strokeWidth="5.500" />
          <path d="M9 17.500H26" stroke="#2f86d6" strokeWidth="4" />
          <path d="M20.500 20.500H30V25H19Z" fill="#d4d0c8" />
          <path d="M4 31C-1 27 9 11 20 5C27 1 32 1 29.500 7" stroke="#f1b52c" strokeWidth="2.300" />
        </Svg>
      </div>
      <div className="h-[38px] w-[4px] border-r-2 border-[#606060]" />
      <div className="h-[38px] w-[4px] border-r-2 border-[#606060]" />
      <div className="ml-[2px] flex h-[38px] w-[48px] items-center border border-t-2 border-l-2 border-[#fff] border-t-[#404040] border-l-[#404040] bg-white pl-[5px]">
        <Svg s={32}>
          <rect x="1.500" y=".5" width="29" height="30" rx="4" fill="#f9a01e" stroke="#fbc56c" />
          <rect x="3.500" y="2.500" width="25" height="26" rx="2" stroke="#fbb850" />
          <g fill="#fff">
            <rect x="5.500" y="5.500" width="8.500" height="8.500" />
            <rect x="18" y="5.500" width="8.500" height="8.500" />
            <rect x="5.500" y="18" width="8.500" height="8.500" />
            <rect x="18" y="18" width="8.500" height="8.500" />
          </g>
          <g stroke="#f0921a" strokeWidth="1.300">
            <path d="M7 12.500L9 10.500L10.500 9L13 6.500M20 13V11M22 13V9M24.500 13V7M7.500 20H12.500V25H7.500ZM7.500 22.500H12.500M10 20V25" />
            <circle cx="22.200" cy="22.200" r="2.800" />
            <path d="M22.200 19V22.200H25.200" />
          </g>
        </Svg>
      </div>
      <div className="flex-1" />
      <div className="mr-[2px] flex h-[38px] w-[172px] items-center border border-[#fff] border-t-[#808080] border-l-[#808080]">
        <Svg s={8} h={10} className="ml-[4px]"><path d="M1 4L4 1L7 4M1 8.500L4 5.500L7 8.500" stroke="#000" strokeWidth="1.400" /></Svg>
        <Svg s={18} className="ml-[9px]">
          <path d="M2 2V17" stroke="#777" strokeWidth="2.400" />
          <path d="M2 2V17" stroke="#fff" />
          <path d="M3.500 2.500H9L10 4.500H16L14.500 7L16 9.500H9L8 7.500H3.500Z" fill="#f4f4f4" stroke="#777" />
        </Svg>
        <Svg s={18} className="ml-[6px]">
          <rect x="5.500" y="4.500" width="11" height="9" fill="#a7adb0" stroke="#fff" strokeWidth="1.500" />
          <rect x="4.500" y="3.500" width="12" height="10.500" stroke="#666" strokeWidth=".8" />
          <path d="M8 16.500H14" stroke="#666" strokeWidth="1.800" />
          <path d="M1.500 2.500H6.500V7.500H1.500ZM4 7.500V16H7" fill="#f4f4f4" stroke="#555" />
        </Svg>
        <Svg s={18} className="ml-[6px]">
          <path d="M1.500 6.500H4L8 3V15L4 11.500H1.500Z" fill="#f4f4f4" stroke="#777" />
          <circle cx="12" cy="12" r="5" fill="#dc3222" stroke="#fff" strokeWidth=".8" />
          <path d="M10 10L14 14M14 10L10 14" stroke="#fff" strokeWidth="1.600" />
        </Svg>
        <div className="ml-[6px] flex w-[58px] flex-col items-center">
          <T w={45}>10:16 PM</T>
          <T w={56}>10/11/2012</T>
        </div>
        <Svg s={16} className="ml-[2px]">
          <path d="M0 3L15 2V13L0 14Z" fill="#2c6cc4" stroke="#1c3c74" />
          <path d="M1 3.500L14 2.500V6L1 9Z" fill="#6fa9ea" />
          <path d="M0 12H15V14H0Z" fill="#22385e" />
        </Svg>
      </div>
    </div>
  );
}

export default function App() {
  return (
    <div className="flex h-[900px] w-[1440px] flex-col overflow-hidden bg-[#d4d0c8] font-['DejaVu_Sans_Condensed','DejaVu_Sans',sans-serif] text-[11px] leading-[16px] text-black [font-stretch:condensed]">
      <svg width="0" height="0" className="absolute">
        <defs>
          <radialGradient id="bevel"><stop offset=".74" stopColor="#000" stopOpacity="0" /><stop offset="1" stopColor="#101c30" stopOpacity=".45" /></radialGradient>
          <linearGradient id="fun"><stop offset=".15" stopColor="#f4f4f4" /><stop offset=".5" stopColor="#b8b8b8" /><stop offset=".75" stopColor="#3a3a3a" /></linearGradient>
          <linearGradient id="orb" x2="0" y2="1"><stop offset="0" stopColor="#f8fafd" /><stop offset=".5" stopColor="#cdd4e2" /><stop offset="1" stopColor="#e6f0ff" /></linearGradient>
          <linearGradient id="ps" x2="0" y2="1"><stop offset="0" stopColor="#5aa9e4" /><stop offset="1" stopColor="#1a62ac" /></linearGradient>
          <linearGradient id="ie" x2="0" y2="1"><stop offset="0" stopColor="#1c62b4" /><stop offset="1" stopColor="#48b4f0" /></linearGradient>
          <linearGradient id="fold" x2="0" y2="1"><stop offset="0" stopColor="#fbe9a2" /><stop offset="1" stopColor="#eec765" /></linearGradient>
        </defs>
      </svg>
      <div className="flex h-[856px] shrink-0 flex-col border-x border-[#7da4e3] bg-[linear-gradient(#c6d9fd_30px,#bccffa_165px,#a9c1f0_400px,#7595d6_829px)]">
        <TitleBar />
        <Ribbon />
        <div className="mt-[5px] flex h-[658px] shrink-0 pl-[5px]">
          <Workspace />
          <div className="w-[6px]" />
          <Designer />
          <div className="w-[6px]" />
          <Details />
        </div>
        <div className="mb-[5px] h-px shrink-0 bg-[#e8f0ff]" />
        <div className="flex h-[27px] shrink-0 items-center border-b border-[#7da4e3] bg-[linear-gradient(#c8dcfe,#d8e7ff_40%,#d0e2ff)] pl-2 text-[#00309c]">
          <T w={195}>Connected to: http://vcdcmos003:8081/</T>
        </div>
      </div>
      <Taskbar />
    </div>
  );
}
